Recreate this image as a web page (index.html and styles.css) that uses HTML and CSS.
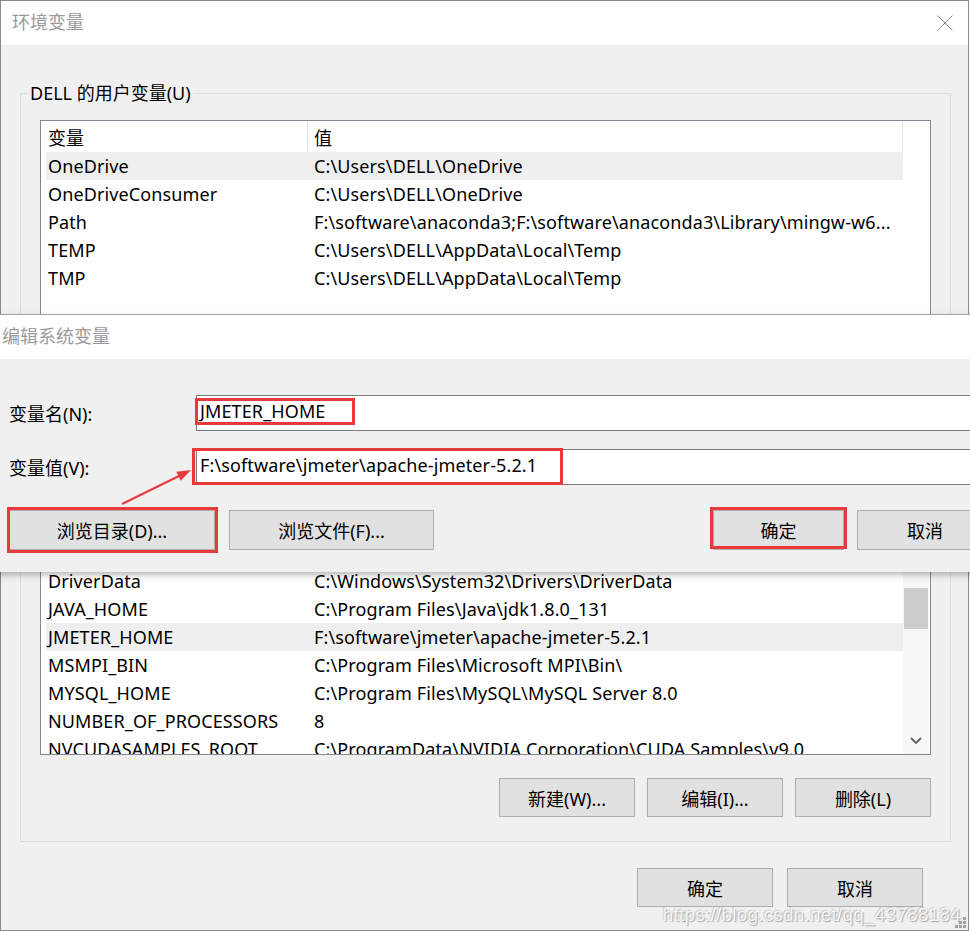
FILE: index.html
```html
<!DOCTYPE html>
<html lang="zh-CN">
<head>
<meta charset="utf-8">
<title>环境变量</title>
<link rel="stylesheet" href="styles.css">
</head>
<body>
<div class="window">
  <div class="titlebar">
    <span class="title">环境变量</span>
    <svg class="close" width="16" height="16" viewBox="0 0 16 16"><path d="M0.5 0.5 L15.5 15.5 M15.5 0.5 L0.5 15.5" stroke="#8a8a8a" stroke-width="1" fill="none"/></svg>
  </div>
  <div class="client">
    <fieldset class="group group-user">
      <legend>DELL 的用户变量(U)</legend>
      <div class="group-body">
        <div class="list list-user">
          <div class="list-main">
            <div class="list-header"><div class="hcell c1">变量</div><div class="hcell c2">值</div></div>
            <div class="row selected"><div class="cell c1">OneDrive</div><div class="cell c2">C:\Users\DELL\OneDrive</div></div>
            <div class="row"><div class="cell c1">OneDriveConsumer</div><div class="cell c2">C:\Users\DELL\OneDrive</div></div>
            <div class="row"><div class="cell c1">Path</div><div class="cell c2">F:\software\anaconda3;F:\software\anaconda3\Library\mingw-w6...</div></div>
            <div class="row"><div class="cell c1">TEMP</div><div class="cell c2">C:\Users\DELL\AppData\Local\Temp</div></div>
            <div class="row"><div class="cell c1">TMP</div><div class="cell c2">C:\Users\DELL\AppData\Local\Temp</div></div>
          </div>
        </div>
      </div>
    </fieldset>
    <fieldset class="group group-sys">
      <legend>系统变量(S)</legend>
      <div class="group-body">
        <div class="list list-sys">
          <div class="list-main">
            <div class="list-header"><div class="hcell c1">变量</div><div class="hcell c2">值</div></div>
            <div class="row"><div class="cell c1">ComSpec</div><div class="cell c2">C:\Windows\system32\cmd.exe</div></div>
            <div class="row"><div class="cell c1">DriverData</div><div class="cell c2">C:\Windows\System32\Drivers\DriverData</div></div>
            <div class="row"><div class="cell c1">JAVA_HOME</div><div class="cell c2">C:\Program Files\Java\jdk1.8.0_131</div></div>
            <div class="row selected"><div class="cell c1">JMETER_HOME</div><div class="cell c2">F:\software\jmeter\apache-jmeter-5.2.1</div></div>
            <div class="row"><div class="cell c1">MSMPI_BIN</div><div class="cell c2">C:\Program Files\Microsoft MPI\Bin\</div></div>
            <div class="row"><div class="cell c1">MYSQL_HOME</div><div class="cell c2">C:\Program Files\MySQL\MySQL Server 8.0</div></div>
            <div class="row"><div class="cell c1">NUMBER_OF_PROCESSORS</div><div class="cell c2">8</div></div>
            <div class="row"><div class="cell c1">NVCUDASAMPLES_ROOT</div><div class="cell c2">C:\ProgramData\NVIDIA Corporation\CUDA Samples\v9.0</div></div>
          </div>
          <div class="scrollbar">
            <div class="sb-btn"></div>
            <div class="sb-track"><div class="sb-thumb"></div></div>
            <div class="sb-btn"><svg width="12" height="8" viewBox="0 0 12 8"><path d="M1 1 L6 6 L11 1" stroke="#606060" stroke-width="1.8" fill="none"/></svg></div>
          </div>
        </div>
        <div class="group-buttons">
          <button class="btn">新建(W)...</button>
          <button class="btn">编辑(I)...</button>
          <button class="btn">删除(L)</button>
        </div>
      </div>
    </fieldset>
    <div class="dialog-buttons">
      <button class="btn">确定</button>
      <button class="btn">取消</button>
    </div>
  </div>
  <div class="watermark">https://blog.csdn.net/qq_43788184</div>
  <div class="grip"><i></i><i></i><i></i><i></i><i></i><i></i></div>
</div>

<div class="edit-dialog">
  <div class="edit-titlebar">编辑系统变量</div>
  <div class="edit-body">
    <div class="field-row"><span class="field-label">变量名(N):</span><div class="input">JMETER_HOME</div></div>
    <div class="field-row"><span class="field-label">变量值(V):</span><div class="input">F:\software\jmeter\apache-jmeter-5.2.1</div></div>
    <div class="edit-buttons">
      <button class="btn btn-wide">浏览目录(D)...</button>
      <button class="btn btn-wide2">浏览文件(F)...</button>
      <span class="spacer"></span>
      <button class="btn btn-ok">确定</button>
      <button class="btn btn-cancel">取消</button>
    </div>
  </div>
</div>

<div class="mark mark-name"></div>
<div class="mark mark-value"></div>
<div class="mark mark-browse"></div>
<div class="mark mark-ok"></div>
<svg class="arrow" width="80" height="48" viewBox="0 0 80 48"><path d="M4 42 L61 14" stroke="#e83a3a" stroke-width="2" fill="none"/><polygon points="73,8 62.7,18.7 58.3,9.7" fill="#e83a3a"/></svg>
</body>
</html>
```

FILE: styles.css
```css
* { box-sizing: border-box; }
html, body { margin: 0; padding: 0; }
body {
  width: 970px;
  height: 931px;
  overflow: hidden;
  position: relative;
  background: #ffffff;
  font-family: "Noto Sans", "Noto Sans CJK SC", sans-serif;
  font-size: 18px;
  color: #000;
}

.window {
  width: 969px;
  height: 931px;
  border: 1px solid #8a8a8a;
  background: #f0f0f0;
  display: flex;
  flex-direction: column;
  position: relative;
}
.titlebar {
  flex: none;
  height: 44px;
  background: #fff;
  display: flex;
  align-items: center;
  justify-content: space-between;
  padding: 0 15px 0 11px;
}
.title { color: #9a9a9a; font-size: 18px; line-height: 22px; margin-bottom: 3px; }
.close { display: block; }

.client { flex: 1; display: flex; flex-direction: column; }

.group {
  width: 931px;
  margin: 0 0 0 19px;
  border: 1px solid #dcdcdc;
  padding: 0;
  min-width: 0;
}
.group legend {
  margin-left: 7px;
  padding: 0 2px;
  line-height: 22px;
  height: 22px;
  font-size: 18px;
}
.group-user { margin-top: 37px; }
.group-sys { margin-top: 9px; }
.group-body { padding: 16px 18px 9px 19px; }
.group-sys .group-body { padding-bottom: 24px; }

.list {
  width: 891px;
  border: 1px solid #828790;
  background: #fff;
  display: flex;
  overflow: hidden;
}
.list-user { height: 330px; }
.list-sys { height: 248px; }
.list-main {
  width: 862px;
  padding-left: 5px;
  overflow: hidden;
  flex: none;
  letter-spacing: 0.12px;
}
.list-header {
  display: grid;
  grid-template-columns: 262px 595px;
  height: 31px;
}
.hcell {
  line-height: 31px;
  padding-top: 2px;
  white-space: nowrap;
}
.hcell.c1 { padding-left: 2px; border-right: 1px solid #e5e5e5; }
.hcell.c2 { padding-left: 6px; border-right: 1px solid #e5e5e5; }
.row {
  display: grid;
  grid-template-columns: 262px 595px;
  height: 28px;
  line-height: 28px;
  white-space: nowrap;
}
.row.selected { background: #efefef; }
.cell { overflow: hidden; }
.cell.c1 { padding-left: 2px; }
.cell.c2 { padding-left: 6px; }

.scrollbar {
  width: 26px;
  flex: none;
  display: flex;
  flex-direction: column;
  background: #f7f7f7;
}
.sb-btn {
  height: 26px;
  flex: none;
  display: flex;
  align-items: center;
  justify-content: center;
}
.sb-track { flex: 1; padding: 54px 1px 0; }
.sb-thumb { height: 41px; background: #cdcdcd; }

.group-buttons {
  margin-top: 23px;
  display: flex;
  justify-content: flex-end;
  gap: 12px;
  width: 891px;
}
.btn {
  font-family: inherit;
  font-size: 18px;
  color: #000;
  background: #e1e1e1;
  border: 1px solid #adadad;
  padding: 0;
  margin: 0;
  height: 39px;
  width: 136px;
}
.dialog-buttons {
  margin-top: 26px;
  display: flex;
  justify-content: flex-end;
  gap: 14px;
  padding-right: 45px;
}

.watermark {
  position: absolute;
  right: 7px;
  bottom: 4px;
  font-family: "Liberation Sans", sans-serif;
  font-size: 19px;
  color: rgba(255, 255, 255, 0.85);
  text-shadow: 1px 1px 1px rgba(0, 0, 0, 0.3), -1px -1px 1px rgba(0, 0, 0, 0.15);
  letter-spacing: 0.2px;
}
.grip {
  position: absolute;
  right: 2px;
  bottom: 2px;
  width: 11px;
  height: 11px;
}
.grip i {
  position: absolute;
  width: 3px;
  height: 3px;
  background: #a0a0a0;
}
.grip i:nth-child(1) { right: 0; bottom: 0; }
.grip i:nth-child(2) { right: 4px; bottom: 0; }
.grip i:nth-child(3) { right: 8px; bottom: 0; }
.grip i:nth-child(4) { right: 0; bottom: 4px; }
.grip i:nth-child(5) { right: 4px; bottom: 4px; }
.grip i:nth-child(6) { right: 0; bottom: 8px; }

/* overlaid edit dialog */
.edit-dialog {
  position: absolute;
  left: -10px;
  top: 314px;
  width: 1022px;
  border-top: 1px solid #a3a3a3;
  background: #f0f0f0;
  box-shadow: 0 3px 6px rgba(0, 0, 0, 0.28);
}
.edit-titlebar {
  height: 44px;
  line-height: 42px;
  background: #fff;
  color: #9a9a9a;
  padding-left: 12px;
}
.edit-body {
  padding: 36px 19px 22px 19px;
  display: flex;
  flex-direction: column;
}
.field-row {
  display: flex;
  align-items: center;
  height: 36px;
}
.field-row + .field-row { margin-top: 18px; }
.field-label { width: 187px; flex: none; }
.input {
  flex: 1;
  height: 36px;
  background: #fff;
  border: 1px solid #7a7a7a;
  padding-left: 3px;
  line-height: 31px;
  white-space: nowrap;
  letter-spacing: 0.12px;
}
.edit-buttons {
  margin-top: 25px;
  display: flex;
  gap: 14px;
}
.edit-buttons .btn { height: 40px; }
.btn-wide { width: 206px; }
.btn-wide2 { width: 205px; }
.btn-ok { width: 131px; }
.btn-cancel { width: 136px; margin-left: -1px; }
.spacer { flex: 1; }

/* red annotation marks */
.mark {
  position: absolute;
  border: 3px solid #e83a3a;
}
.mark-name { left: 195px; top: 398px; width: 160px; height: 27px; }
.mark-value { left: 192px; top: 448px; width: 371px; height: 37px; }
.mark-browse { left: 7px; top: 507px; width: 211px; height: 46px; }
.mark-ok { left: 710px; top: 507px; width: 137px; height: 42px; }
.arrow { position: absolute; left: 118px; top: 462px; }
```
